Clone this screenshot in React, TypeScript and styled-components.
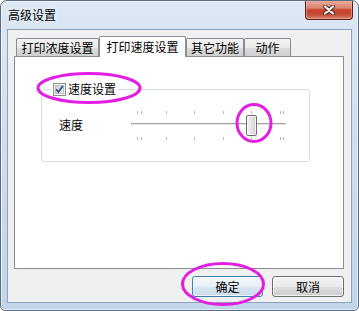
import React from 'react';
import styled, { createGlobalStyle } from 'styled-components';

const GlobalStyle = createGlobalStyle`
  html, body {
    margin: 0;
    padding: 0;
    background: #ffffff;
  }
  body {
    font-family: "Noto Sans CJK SC", "Noto Sans", sans-serif;
    font-size: 12px;
    color: #000;
  }
`;

const Screen = styled.div`
  position: relative;
  width: 359px;
  height: 311px;
`;

const Window = styled.div`
  width: 359px;
  height: 311px;
  box-sizing: border-box;
  border: 1px solid #5b6d80;
  border-radius: 7px 7px 5px 5px;
  background: linear-gradient(180deg, #dce8f4 0%, #cfdeee 45%, #c2d5ea 100%);
  box-shadow: inset 0 0 0 1px rgba(255, 255, 255, 0.55);
  padding: 0 6px 7px 6px;
  display: flex;
  flex-direction: column;
  overflow: hidden;
`;

const TitleBar = styled.div`
  height: 28px;
  flex: none;
  display: flex;
  align-items: center;
  justify-content: space-between;
  padding-left: 1px;
`;

const Title = styled.span`
  font-size: 12px;
  line-height: 14px;
  padding-bottom: 1px;
  text-shadow: 0 0 6px rgba(255, 255, 255, 0.9);
`;

const CloseButton = styled.div`
  align-self: flex-start;
  width: 48px;
  height: 20px;
  margin-top: -1px;
  margin-right: -1px;
  box-sizing: border-box;
  border: 1px solid #5a2218;
  border-top: none;
  border-radius: 0 0 4px 4px;
  background: linear-gradient(180deg, #eab0a0 0%, #dc8571 42%, #c8432c 52%, #c34a33 75%, #d8826b 100%);
  box-shadow: inset 0 0 0 1px rgba(255, 200, 190, 0.45);
  display: flex;
  align-items: center;
  justify-content: center;
`;

const Client = styled.div`
  flex: 1;
  display: flex;
  flex-direction: column;
  background: #f0f0f0;
  border: 1px solid #8ea3ba;
  padding: 6px 7px 5px 6px;
  min-height: 0;
`;

const TabStrip = styled.div`
  height: 20px;
  flex: none;
  display: flex;
  align-items: flex-end;
  padding-left: 2px;
  position: relative;
  z-index: 1;
`;

const Tab = styled.div<{ $active?: boolean; $w: number }>`
  width: ${p => p.$w}px;
  height: ${p => (p.$active ? 21 : 18)}px;
  margin-bottom: ${p => (p.$active ? -1 : 0)}px;
  box-sizing: border-box;
  border: 1px solid #898c95;
  border-bottom: none;
  border-radius: 2px 2px 0 0;
  background: ${p =>
    p.$active ? '#ffffff' : 'linear-gradient(180deg, #f2f2f2 0%, #ebebeb 50%, #dddddd 51%, #cfcfcf 100%)'};
  display: flex;
  align-items: center;
  justify-content: center;
  font-size: 12px;
  line-height: 14px;
  white-space: nowrap;
`;

const Panel = styled.div`
  flex: 1;
  min-height: 0;
  background: #ffffff;
  border: 1px solid #898c95;
  padding: 25px 0 0 26px;
`;

const GroupBox = styled.fieldset`
  margin: 0;
  min-width: 0;
  width: 269px;
  box-sizing: border-box;
  border: 1px solid #d5dfe5;
  border-radius: 3px;
  padding: 13px 0 20px 9px;
`;

const GroupLegend = styled.legend`
  padding: 0 2px;
  display: flex;
  align-items: center;
  gap: 2px;
  height: 14px;
  line-height: 14px;
  font-size: 12px;
`;

const Row = styled.div`
  display: flex;
  align-items: center;
  height: 32px;
  padding-left: 8px;
`;

const SpeedLabel = styled.span`
  width: 72px;
  font-size: 12px;
  line-height: 14px;
`;

const Slider = styled.div`
  position: relative;
  width: 155px;
  height: 32px;
`;

const Thumb = styled.div`
  position: absolute;
  top: 6px;
  width: 11px;
  height: 21px;
  box-sizing: border-box;
  border: 1px solid #6f6f6f;
  border-radius: 2px;
  background: linear-gradient(90deg, #f4f4f4 0%, #e2e2e2 55%, #cfcfcf 100%);
  box-shadow: inset 0 0 0 1px rgba(255, 255, 255, 0.7);
`;

const ButtonRow = styled.div`
  flex: none;
  display: flex;
  justify-content: flex-end;
  gap: 9px;
  margin-top: 7px;
`;

const DialogButton = styled.div<{ $default?: boolean; $w: number }>`
  width: ${p => p.$w}px;
  height: 21px;
  box-sizing: border-box;
  border: 1px solid ${p => (p.$default ? '#3c7fb1' : '#707070')};
  border-radius: 3px;
  background: ${p =>
    p.$default
      ? 'linear-gradient(180deg, #f3f8fc 0%, #e7f0f7 50%, #d7e6f1 51%, #c9dcec 100%)'
      : 'linear-gradient(180deg, #f2f2f2 0%, #ebebeb 50%, #dddddd 51%, #cfcfcf 100%)'};
  box-shadow: inset 0 0 0 1px rgba(255, 255, 255, 0.75);
  display: flex;
  align-items: center;
  justify-content: center;
  font-size: 12px;
  line-height: 14px;
`;

const Overlay = styled.svg`
  position: absolute;
  top: 0;
  left: 0;
  pointer-events: none;
`;

const tabs = [
  { label: '打印浓度设置', w: 83 },
  { label: '打印速度设置', w: 87, active: true },
  { label: '其它功能', w: 58 },
  { label: '动作', w: 47 },
];

const TICK0 = 6;
const STEP = 28.6;
const MAX = 5;
const VALUE = 4;

const CloseGlyph = () => (
  <svg width="12" height="10" viewBox="0 0 12 10">
    <path d="M2 1.5 L10 8.5 M10 1.5 L2 8.5" stroke="#5b271d" strokeWidth="4.2" strokeLinecap="round" />
    <path d="M2 1.5 L10 8.5 M10 1.5 L2 8.5" stroke="#ffffff" strokeWidth="2.2" strokeLinecap="round" />
  </svg>
);

const CheckBox = () => (
  <svg width="13" height="13" viewBox="0 0 13 13">
    <defs>
      <linearGradient id="cbin" x1="0" y1="0" x2="1" y2="1">
        <stop offset="0" stopColor="#cbd0d6" />
        <stop offset="1" stopColor="#f7f7f7" />
      </linearGradient>
    </defs>
    <rect x="0.5" y="0.5" width="12" height="12" fill="#f6f6f6" stroke="#8e8f8f" />
    <rect x="2.5" y="2.5" width="8" height="8" fill="url(#cbin)" stroke="#b9bec4" />
    <path d="M3.2 6.3 L5.4 9 L9.8 3" fill="none" stroke="#2f4b8a" strokeWidth="1.8" />
  </svg>
);

const TrackBar = ({ value }: { value: number }) => {
  const ticks: number[] = [];
  for (let i = 0; i <= MAX; i++) ticks.push(Math.round(TICK0 + i * STEP));
  const extra = [ticks[0] + 4, ticks[MAX] + 3];
  return (
    <Slider>
      <svg width="155" height="32" viewBox="0 0 155 32" style={{ display: 'block' }}>
        {[...ticks, ...extra].map(x => (
          <g key={x}>
            <rect x={x} y={2} width={1} height={3} fill="#b8b8b8" />
            <rect x={x} y={28} width={1} height={3} fill="#b8b8b8" />
          </g>
        ))}
        <rect x={0} y={14} width={155} height={1} fill="#a3a3a3" />
        <rect x={0} y={15} width={155} height={1} fill="#e4e4e4" />
        <rect x={0} y={13} width={1} height={3} fill="#c8c8c8" />
      </svg>
      <Thumb style={{ left: Math.round(TICK0 + value * STEP - 5.5) }} />
    </Slider>
  );
};

export default function App() {
  return (
    <Screen>
      <GlobalStyle />
      <Window>
        <TitleBar>
          <Title>高级设置</Title>
          <CloseButton>
            <CloseGlyph />
          </CloseButton>
        </TitleBar>
        <Client>
          <TabStrip>
            {tabs.map(t => (
              <Tab key={t.label} $w={t.w} $active={t.active}>
                {t.label}
              </Tab>
            ))}
          </TabStrip>
          <Panel>
            <GroupBox>
              <GroupLegend>
                <CheckBox />
                <span>速度设置</span>
              </GroupLegend>
              <Row>
                <SpeedLabel>速度</SpeedLabel>
                <TrackBar value={VALUE} />
              </Row>
            </GroupBox>
          </Panel>
          <ButtonRow>
            <DialogButton $default $w={71}>确定</DialogButton>
            <DialogButton $w={72}>取消</DialogButton>
          </ButtonRow>
        </Client>
      </Window>
      <Overlay width="359" height="311" viewBox="0 0 359 311">
        <ellipse cx="89" cy="88" rx="51" ry="14.5" fill="none" stroke="#e31ee2" strokeWidth="3" />
        <ellipse cx="254" cy="123" rx="17" ry="18.5" fill="none" stroke="#e31ee2" strokeWidth="3" />
        <ellipse cx="223" cy="284" rx="40.5" ry="20.5" fill="none" stroke="#e31ee2" strokeWidth="3" />
      </Overlay>
    </Screen>
  );
}
